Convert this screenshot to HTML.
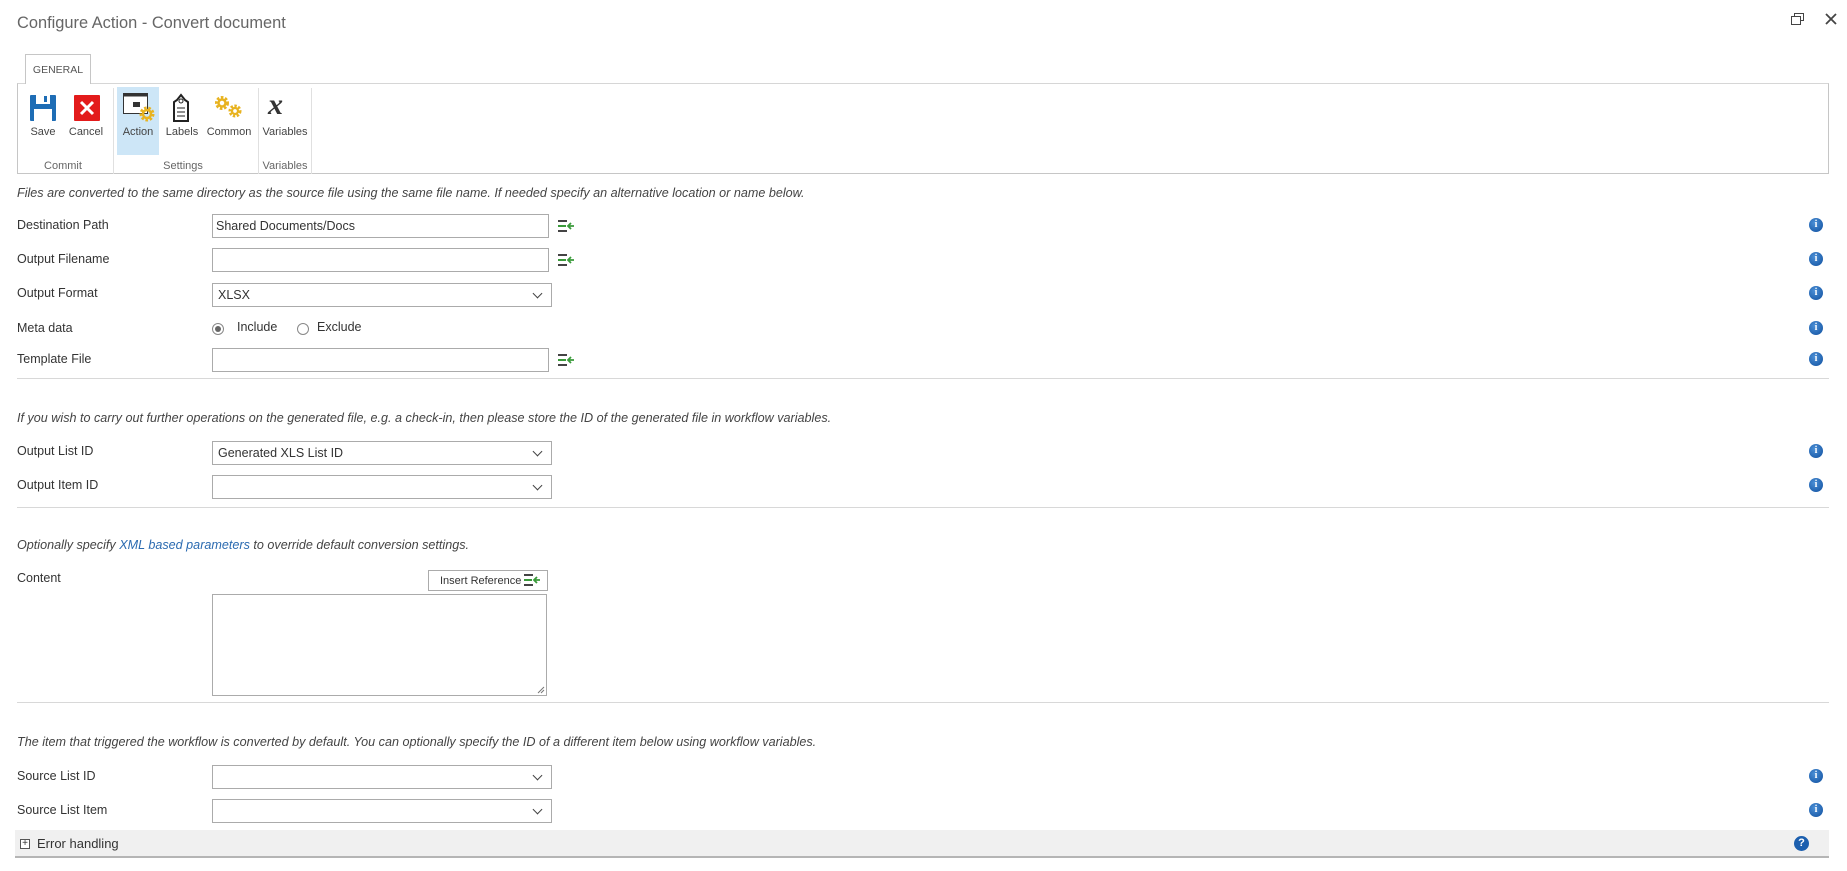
<!DOCTYPE html>
<html><head><meta charset="utf-8"><style>
*{box-sizing:border-box;margin:0;padding:0}
body{width:1847px;height:871px;background:#fff;font-family:"Liberation Sans",sans-serif;color:#444;font-size:12.5px;position:relative;overflow:hidden}
.a{position:absolute;white-space:nowrap}
.lbl{position:absolute;left:17px;font-size:12.5px;color:#333}
.inp{position:absolute;left:212px;width:337px;height:24px;border:1px solid #ababab;background:#fff;font-size:12.5px;padding:4px 3px;color:#333}
.sel{position:absolute;left:212px;width:340px;height:24px;border:1px solid #ababab;background:#fff;font-size:12.5px;padding:4px 5px;color:#333}
.sel:after{content:"";position:absolute;right:10px;top:6px;width:6px;height:6px;border-right:1.6px solid #444;border-bottom:1.6px solid #444;transform:rotate(45deg)}
.sep{position:absolute;left:17px;width:1812px;height:1px;background:#d8d8d8}
.it{position:absolute;left:17px;font-style:italic;font-size:12.6px;color:#444;white-space:nowrap}
.info{position:absolute;left:1809px;width:14px;height:14px;border-radius:50%;background:radial-gradient(circle at 40% 35%,#4b8fd6,#0f4f9e);color:#fff;font:bold 10px "Liberation Serif",serif;text-align:center;line-height:14px}
.ins{position:absolute;left:558px;width:16px;height:12px}
.ribl{position:absolute;font-size:11px;color:#444;text-align:center}
.grp{position:absolute;top:160px;font-size:11px;color:#666;text-align:center}
.vs{position:absolute;top:88px;width:1px;height:86px;background:#e0e0e0}
.radio{position:absolute;width:12px;height:12px;border:1px solid #888;border-radius:50%;background:#fff}
</style></head><body>
<svg width="0" height="0" style="position:absolute"><defs>
<symbol id="insico" viewBox="0 0 16 12"><rect x="0" y="0" width="9" height="2" fill="#444"/><rect x="0" y="5" width="8" height="2" fill="#3a9a3a"/><rect x="0" y="10" width="9" height="2" fill="#444"/><path d="M10 6h6M13 3l-3 3 3 3" stroke="#3a9a3a" stroke-width="1.8" fill="none"/></symbol>
</defs></svg>

<div class="a" style="left:17px;top:14px;font-size:16.4px;color:#666">Configure Action - Convert document</div>
<svg class="a" style="left:1791px;top:13px" width="13" height="12" viewBox="0 0 13 12"><rect x="3.5" y="0.5" width="9" height="7" fill="none" stroke="#444"/><rect x="0.5" y="3.5" width="9" height="8" fill="#fff" stroke="#444"/></svg>
<svg class="a" style="left:1825px;top:13px" width="12" height="12" viewBox="0 0 12 12"><path d="M1 1L11 11M11 1L1 11" stroke="#444" stroke-width="1.8"/></svg>

<div class="a" style="left:25px;top:54px;width:66px;height:30px;border:1px solid #c6c6c6;border-bottom:none;background:#fff;z-index:2;font-size:10.5px;text-align:center;line-height:30px;color:#555">GENERAL</div>
<div class="a" style="left:17px;top:83px;width:1812px;height:91px;border:1px solid #c6c6c6;border-top-color:#d6d6d6"></div>
<div class="a" style="left:117px;top:87px;width:42px;height:68px;background:#cde6f7"></div>
<div class="vs" style="left:113px"></div><div class="vs" style="left:258px"></div><div class="vs" style="left:311px"></div>
<svg class="a" style="left:30px;top:95px" width="26" height="26" viewBox="0 0 26 26"><rect width="26" height="26" rx="1" fill="#1e6db5"/><rect x="6" y="0" width="14" height="9" fill="#fff"/><rect x="14" y="1" width="3" height="6" fill="#1e6db5"/><rect x="4" y="14" width="18" height="12" fill="#fff"/></svg>
<div class="ribl" style="left:23px;top:126px;width:40px">Save</div>
<svg class="a" style="left:74px;top:95px" width="26" height="26" viewBox="0 0 26 26"><rect width="26" height="26" rx="1" fill="#e31b1b"/><path d="M7 7L19 19M19 7L7 19" stroke="#fff" stroke-width="3"/></svg>
<div class="ribl" style="left:66px;top:126px;width:40px">Cancel</div>
<svg class="a" style="left:123px;top:93px" width="32" height="30" viewBox="0 0 32 30"><rect x="0.5" y="0.5" width="24" height="20" fill="#fff" stroke="#333"/><rect x="0.5" y="0.5" width="24" height="3" fill="#333"/><rect x="10" y="9" width="7" height="5" fill="#333"/><circle cx="24" cy="21" r="6" fill="none" stroke="#e8b320" stroke-width="3" stroke-dasharray="2.5 1.7"/><circle cx="24" cy="21" r="4" fill="none" stroke="#e8b320" stroke-width="2.5"/></svg>
<div class="ribl" style="left:117px;top:126px;width:42px">Action</div>
<svg class="a" style="left:172px;top:93px" width="18" height="30" viewBox="0 0 18 30"><path d="M5 7 L9 2 L13 7 L16 9 V28 H2 V9Z" fill="#fff" stroke="#222" stroke-width="2"/><circle cx="9" cy="8" r="2" fill="none" stroke="#222"/><path d="M5 15h8M5 19h8M5 23h8" stroke="#222"/></svg>
<div class="ribl" style="left:162px;top:126px;width:40px">Labels</div>
<svg class="a" style="left:213px;top:95px" width="30" height="24" viewBox="0 0 30 24"><circle cx="9" cy="8" r="5.5" fill="none" stroke="#e8b320" stroke-width="3" stroke-dasharray="2.5 1.6"/><circle cx="9" cy="8" r="3.5" fill="none" stroke="#e8b320" stroke-width="2.5"/><circle cx="22" cy="16" r="5" fill="none" stroke="#e8b320" stroke-width="3" stroke-dasharray="2.3 1.5"/><circle cx="22" cy="16" r="3" fill="none" stroke="#e8b320" stroke-width="2.3"/></svg>
<div class="ribl" style="left:204px;top:126px;width:50px">Common</div>
<div class="a" style="left:268px;top:88px;font:italic bold 30px 'Liberation Serif',serif;color:#333">x</div>
<div class="ribl" style="left:260px;top:126px;width:50px">Variables</div>
<div class="grp" style="left:23px;width:80px">Commit</div>
<div class="grp" style="left:143px;width:80px">Settings</div>
<div class="grp" style="left:245px;width:80px">Variables</div>

<div class="it" style="top:186px">Files are converted to the same directory as the source file using the same file name. If needed specify an alternative location or name below.</div>

<div class="lbl" style="top:218px">Destination Path</div>
<div class="inp" style="top:214px">Shared Documents/Docs</div><svg class="ins" style="top:220px"><use href="#insico"/></svg>
<div class="info" style="top:218px">i</div>

<div class="lbl" style="top:252px">Output Filename</div>
<div class="inp" style="top:248px"></div><svg class="ins" style="top:254px"><use href="#insico"/></svg>
<div class="info" style="top:252px">i</div>

<div class="lbl" style="top:286px">Output Format</div>
<div class="sel" style="top:283px">XLSX</div>
<div class="info" style="top:286px">i</div>

<div class="lbl" style="top:321px">Meta data</div>
<div class="radio" style="left:212px;top:323px"></div><div class="a" style="left:215px;top:326px;width:6px;height:6px;border-radius:50%;background:#666"></div>
<div class="a" style="left:237px;top:320px;color:#333">Include</div>
<div class="radio" style="left:297px;top:323px"></div>
<div class="a" style="left:317px;top:320px;color:#333">Exclude</div>
<div class="info" style="top:321px">i</div>

<div class="lbl" style="top:352px">Template File</div>
<div class="inp" style="top:348px"></div><svg class="ins" style="top:354px"><use href="#insico"/></svg>
<div class="info" style="top:352px">i</div>
<div class="sep" style="top:378px"></div>

<div class="it" style="top:411px">If you wish to carry out further operations on the generated file, e.g. a check-in, then please store the ID of the generated file in workflow variables.</div>
<div class="lbl" style="top:444px">Output List ID</div>
<div class="sel" style="top:441px">Generated XLS List ID</div>
<div class="info" style="top:444px">i</div>
<div class="lbl" style="top:478px">Output Item ID</div>
<div class="sel" style="top:475px"></div>
<div class="info" style="top:478px">i</div>
<div class="sep" style="top:507px"></div>

<div class="it" style="top:538px">Optionally specify <span style="color:#2a6ab0">XML based parameters</span> to override default conversion settings.</div>
<div class="lbl" style="top:571px">Content</div>
<div class="a" style="left:428px;top:570px;width:120px;height:21px;border:1px solid #ababab;font-size:11px;color:#333;padding:3px 0 0 11px">Insert Reference <svg width="16" height="12" style="vertical-align:-2px"><use href="#insico"/></svg></div>
<div class="a" style="left:212px;top:594px;width:335px;height:102px;border:1px solid #ababab"></div>
<svg class="a" style="left:537px;top:686px" width="8" height="8"><path d="M1 7L7 1M4 7L7 4" stroke="#777"/></svg>
<div class="sep" style="top:702px"></div>

<div class="it" style="top:735px">The item that triggered the workflow is converted by default. You can optionally specify the ID of a different item below using workflow variables.</div>
<div class="lbl" style="top:769px">Source List ID</div>
<div class="sel" style="top:765px"></div>
<div class="info" style="top:769px">i</div>
<div class="lbl" style="top:803px">Source List Item</div>
<div class="sel" style="top:799px"></div>
<div class="info" style="top:803px">i</div>

<div class="a" style="left:15px;top:830px;width:1814px;height:28px;background:#f0f0f0;border-bottom:2px solid #b5b5b5"></div>
<div class="a" style="left:20px;top:839px;width:10px;height:10px;border:1px solid #555;background:#fff;font-size:10px;line-height:8px;text-align:center;color:#333">+</div>
<div class="a" style="left:37px;top:836px;color:#333;font-size:13px">Error handling</div>
<div class="a" style="left:1794px;top:836px;width:15px;height:15px;border-radius:50%;background:#1c5fae;color:#fff;font:bold 11px 'Liberation Sans',sans-serif;text-align:center;line-height:15px">?</div>
</body></html>
